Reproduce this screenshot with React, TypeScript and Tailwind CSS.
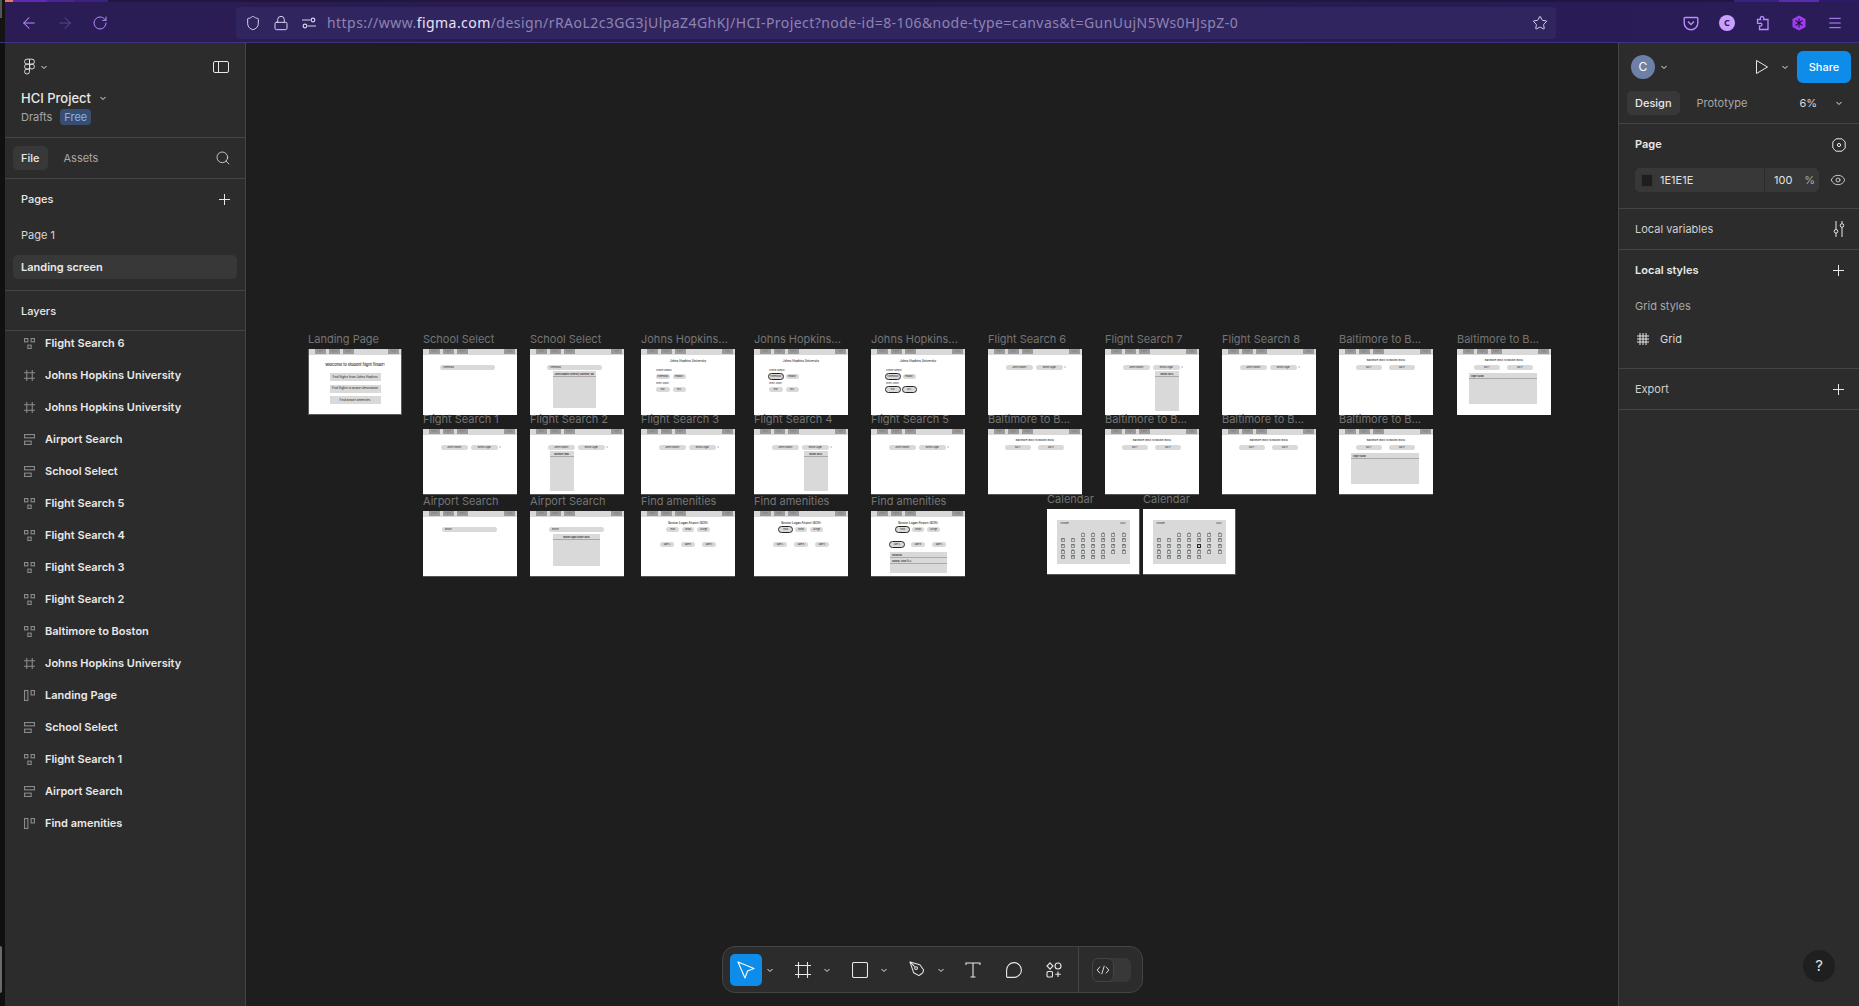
import { ReactNode } from "react";
import { ArrowLeft, ArrowRight, Eye, Lock, Menu, RotateCw, Search, Shield, Star } from "lucide-react";

const Chevron = ({ className = "" }: { className?: string }) => (
  <svg viewBox="0 0 8 8" className={"h-2 w-2 shrink-0 " + className} fill="none" stroke="currentColor" strokeWidth="1">
    <path d="M1.5 3l2.5 2.5L6.5 3" />
  </svg>
);

const PlusIcon = () => (
  <svg viewBox="0 0 11 11" className="mr-[2px] h-[11px] w-[11px]" fill="none" stroke="#e8e8e8">
    <path d="M5.5 0v11M0 5.500h11" />
  </svg>
);

const AutoGrid = () => (
  <svg viewBox="0 0 10 10" className="h-[11px] w-[11px]" fill="none" stroke="#8a8a8a">
    <rect x="0.5" y="0.5" width="3" height="3" />
    <rect x="6.5" y="0.5" width="3" height="3" />
    <rect x="3.5" y="6.5" width="3" height="3" />
  </svg>
);
const FrameHash = () => (
  <svg viewBox="0 0 10 10" className="h-[11px] w-[11px]" fill="none" stroke="#8a8a8a">
    <path d="M2.5 0v10M7.5 0v10M0 2.5h10M0 7.5h10" />
  </svg>
);
const AutoRows = () => (
  <svg viewBox="0 0 10 10" className="h-[11px] w-[11px]" fill="none" stroke="#8a8a8a">
    <rect x="0.5" y="0.5" width="9" height="3" />
    <rect x="0.5" y="6.5" width="6" height="3" />
  </svg>
);
const AutoCols = () => (
  <svg viewBox="0 0 10 10" className="h-[11px] w-[11px]" fill="none" stroke="#8a8a8a">
    <rect x="0.5" y="0.5" width="3" height="9" />
    <rect x="6.5" y="0.5" width="3" height="4" />
  </svg>
);

const layers: [string, ReactNode][] = [
  ["Flight Search 6", <AutoGrid />],
  ["Johns Hopkins University", <FrameHash />],
  ["Johns Hopkins University", <FrameHash />],
  ["Airport Search", <AutoRows />],
  ["School Select", <AutoRows />],
  ["Flight Search 5", <AutoGrid />],
  ["Flight Search 4", <AutoGrid />],
  ["Flight Search 3", <AutoGrid />],
  ["Flight Search 2", <AutoGrid />],
  ["Baltimore to Boston", <AutoGrid />],
  ["Johns Hopkins University", <FrameHash />],
  ["Landing Page", <AutoCols />],
  ["School Select", <AutoRows />],
  ["Flight Search 1", <AutoGrid />],
  ["Airport Search", <AutoRows />],
  ["Find amenities", <AutoCols />],
];

const BrowserBar = () => (
  <div className="relative h-[43px] shrink-0 border-b border-[#40327f] bg-gradient-to-r from-[#2b1c55] via-[#281b50] to-[#2a1c58] font-['Noto_Sans',sans-serif]">
    <div className="absolute left-0 top-0 h-full w-[5px] bg-[#141414]">
      <div className="h-[18px] w-[2px] bg-[#555555]" />
    </div>
    <div className="flex h-[2px] bg-[#20173f]">
      <div className="w-[5px]" />
      <div className="w-[8px] bg-[#e87a68]" />
      <div className="w-[34px] bg-[#5c2bb0]" />
      <div className="w-[27px] bg-[#4a2495]" />
      <div className="w-[34px] bg-[#3d2080]" />
      <div className="ml-auto w-[45px] bg-[#3a2080]" />
      <div className="w-[40px] bg-[#5a2cae]" />
      <div className="w-[40px] bg-[#30196a]" />
    </div>
    <div className="flex h-[41px] items-center pr-[16px]">
      <ArrowLeft className="ml-[20px] h-[18px] w-[18px] text-[#b98cff]" strokeWidth={1.4} />
      <ArrowRight className="ml-[18px] h-[18px] w-[18px] text-[#5b4690]" strokeWidth={1.4} />
      <RotateCw className="ml-[18px] h-[16px] w-[16px] text-[#b98cff]" strokeWidth={1.5} />
      <div className="ml-[128px] flex h-[32px] w-[1320px] items-center rounded-[4px] bg-[#312560] pl-[9px] pr-[8px]">
        <Shield className="h-[16px] w-[16px] text-[#d8d0ee]" strokeWidth={1.5} />
        <Lock className="ml-[12px] h-[16px] w-[16px] text-[#d8d0ee]" strokeWidth={1.5} />
        <svg viewBox="0 0 16 16" className="ml-[12px] h-[16px] w-[16px] text-[#d8d0ee]" fill="none" stroke="currentColor" strokeWidth="1.2">
          <circle cx="4" cy="11" r="1.8" />
          <circle cx="12" cy="5" r="1.8" />
          <path d="M1 5h8.5M6.5 11H15" />
        </svg>
        <span className="ml-[10px] whitespace-nowrap text-[14px] tracking-[0.44px] text-[#8d84b0]">
          https://www.<span className="text-[#e6e2f2]">figma.com</span>/design/rRAoL2c3GG3jUlpaZ4GhKJ/HCI-Project?node-id=8-106&amp;node-type=canvas&amp;t=GunUujN5Ws0HJspZ-0
        </span>
        <Star className="ml-auto h-[16px] w-[16px] text-[#d8d0ee]" strokeWidth={1.5} />
      </div>
      <div className="ml-auto flex items-center gap-[20px]">
        <svg viewBox="0 0 16 16" className="h-[16px] w-[16px] text-[#b98cff]" fill="none" stroke="currentColor" strokeWidth="1.4">
          <path d="M2 2.5h12a.8.8 0 01.8.8V8a6.8 6.8 0 01-13.6 0V3.3a.8.8 0 01.8-.8z" />
          <path d="M5 6.5L8 9.5l3-3" />
        </svg>
        <div className="flex h-[16px] w-[16px] items-center justify-center rounded-full bg-[#c9a0ff] text-[9px] font-bold text-[#2b1c55]">C</div>
        <svg viewBox="0 0 16 16" className="h-[16px] w-[16px] text-[#b98cff]" fill="none" stroke="currentColor" strokeWidth="1.3">
          <path d="M7 1.5c2 0 2.2 2 1.6 3H13v10H4.5v-3.5c1.2.4 2.5-.2 2.5-1.4S5.7 8 4.5 8.4H2.5V4.5H5.6C5 3.5 5.2 1.5 7 1.5z" />
        </svg>
        <svg viewBox="0 0 16 16" className="h-[16px] w-[16px]">
          <path d="M8 .5l6.5 3.5v8L8 15.5 1.5 12V4z" fill="#a03cf0" />
          <path d="M8 3.5v9M4.5 5.5l7 5M11.5 5.5l-7 5" stroke="#1f1540" strokeWidth="1.1" />
        </svg>
        <Menu className="h-[16px] w-[16px] text-[#b98cff]" strokeWidth={1.5} />
      </div>
    </div>
  </div>
);

const LeftPanel = () => (
  <aside className="flex w-[241px] shrink-0 flex-col border-r border-[#444444] bg-[#2c2c2c] text-[11px] text-[#e8e8e8]">
    <div className="h-[95px] shrink-0 border-b border-[#444444] pl-[16px] pr-[16px]">
      <div className="flex h-[47px] items-center">
        <svg viewBox="0 0 12 18" className="ml-[3px] h-[17px] w-[11px]" fill="none" stroke="#e8e8e8" strokeWidth="1">
          <path d="M6 1H3.3a2.7 2.7 0 000 5.4H6zM6 6.4H3.3a2.7 2.7 0 000 5.4H6zM6 11.8H3.3A2.7 2.7 0 106 14.5zM6 1h2.7a2.7 2.7 0 010 5.4H6z" />
          <circle cx="8.7" cy="9.1" r="2.7" />
        </svg>
        <Chevron className="ml-[5px]" />
        <svg viewBox="0 0 16 12" className="ml-auto h-[12px] w-[16px]" fill="none" stroke="#e8e8e8">
          <rect x="0.5" y="0.5" width="15" height="11" rx="1.5" />
          <path d="M5.5 0.5v11" />
        </svg>
      </div>
      <div className="flex items-center text-[13px] font-medium leading-[16px]">
        HCI Project
        <Chevron className="ml-[8px]" />
      </div>
      <div className="mt-[3px] flex items-center leading-[16px] text-[#a8a8a8]">
        Drafts
        <span className="ml-[8px] rounded-[4px] bg-[#3a4c70] px-[4px] text-[#7cb8ee]">Free</span>
      </div>
    </div>
    <div className="flex h-[41px] shrink-0 items-center border-b border-[#444444] pl-[8px] pr-[14px]">
      <span className="flex h-[24px] items-center rounded-[5px] bg-[#383838] px-[8px] font-medium">File</span>
      <span className="ml-[8px] px-[8px] text-[#a8a8a8]">Assets</span>
      <Search className="ml-auto h-[16px] w-[16px]" strokeWidth={1.2} />
    </div>
    <div className="h-[112px] shrink-0 border-b border-[#444444]">
      <div className="flex h-[40px] items-center justify-between pl-[16px] pr-[13px] font-medium">
        Pages
        <PlusIcon />
      </div>
      <div className="flex h-[32px] items-center pl-[16px] text-[#d8d8d8]">Page 1</div>
      <div className="mx-[8px] mt-[4px] flex h-[24px] items-center rounded-[5px] bg-[#383838] pl-[8px] font-semibold">Landing screen</div>
    </div>
    <div className="flex h-[40px] shrink-0 items-center border-b border-[#444444] pl-[16px] pt-[1px] font-medium">Layers</div>
    <div className="-mt-[4px]">
      {layers.map(([name, icon], i) => (
        <div key={i} className="flex h-[32px] items-center pl-[19px] font-semibold">
          <span className="w-[21px]">{icon}</span>
          {name}
        </div>
      ))}
    </div>
  </aside>
);

const Section = ({ title, bold, right, className = "h-[41px]" }: { title: string; bold?: boolean; right?: ReactNode; className?: string }) => (
  <div className={"flex shrink-0 items-center justify-between border-b border-[#444444] pl-[16px] pr-[13px] " + className}>
    <span className={bold ? "font-semibold text-[#f0f0f0]" : "text-[#d0d0d0]"}>{title}</span>
    {right}
  </div>
);

const RightPanel = () => (
  <aside className="relative flex w-[241px] shrink-0 flex-col border-l border-[#444444] bg-[#2c2c2c] text-[11px] text-[#e8e8e8]">
    <div className="flex h-[40px] shrink-0 items-end pl-[12px] pr-[8px]">
      <div className="flex h-[32px] w-full items-center">
        <span className="flex h-[24px] w-[24px] items-center justify-center rounded-full bg-[#6c80a8] text-[12px] text-white">C</span>
        <Chevron className="ml-[5px]" />
        <svg viewBox="0 0 14 16" className="ml-auto h-[16px] w-[14px]" fill="none" stroke="#e8e8e8">
          <path d="M1.5 1.5L12.5 8 1.5 14.5z" strokeLinejoin="round" />
        </svg>
        <Chevron className="ml-[12px]" />
        <span className="ml-[8px] flex h-[32px] w-[54px] items-center justify-center rounded-[6px] bg-[#0d8ce9] font-medium text-white">Share</span>
      </div>
    </div>
    <div className="flex h-[41px] shrink-0 items-center border-b border-[#444444] pl-[8px] pr-[16px]">
      <span className="flex h-[24px] items-center rounded-[5px] bg-[#383838] px-[8px] font-medium">Design</span>
      <span className="ml-[9px] px-[8px] text-[#a8a8a8]">Prototype</span>
      <span className="ml-auto text-[#d8d8d8]">6%</span>
      <Chevron className="ml-[18px]" />
    </div>
    <div className="h-[85px] shrink-0 border-b border-[#444444]">
      <div className="flex h-[41px] items-center justify-between pl-[16px] pr-[13px] font-semibold">
        Page
        <svg viewBox="0 0 14 14" className="h-[14px] w-[14px]" fill="none" stroke="#e8e8e8">
          <path d="M4 .8h6L13.2 4v6L10 13.2H4L.8 10V4z" />
          <circle cx="7" cy="7" r="1.6" />
        </svg>
      </div>
      <div className="mt-[3px] flex items-center pl-[16px] pr-[13px]">
        <div className="flex h-[24px] w-[184px] items-center rounded-[5px] bg-[#383838] pl-[6px] text-[#e0e0e0]">
          <span className="h-[13px] w-[12px] border border-[#333333] bg-[#1e1e1e]" />
          <span className="ml-[7px]">1E1E1E</span>
          <span className="ml-auto flex h-full w-[55px] items-center border-l border-[#2c2c2c] pl-[9px]">
            100
            <span className="ml-[12px] text-[#a8a8a8]">%</span>
          </span>
        </div>
        <Eye className="ml-auto h-[16px] w-[16px]" strokeWidth={1.2} />
      </div>
    </div>
    <Section
      title="Local variables"
      right={
        <svg viewBox="0 0 14 16" className="h-[16px] w-[14px]" fill="none" stroke="#e8e8e8">
          <path d="M4 0v8.500M4 12v4M10 0v2.500M10 6.500V16" />
          <circle cx="4" cy="10.300" r="1.800" />
          <circle cx="10" cy="4.500" r="1.800" />
        </svg>
      }
    />
    <div className="h-[119px] shrink-0 border-b border-[#444444]">
      <div className="flex h-[41px] items-center justify-between pl-[16px] pr-[13px] font-semibold">
        Local styles
        <PlusIcon />
      </div>
      <div className="-mt-[1px] flex h-[32px] items-center pl-[16px] text-[#a8a8a8]">Grid styles</div>
      <div className="flex h-[34px] items-center pl-[18px] text-[#d8d8d8]">
        <svg viewBox="0 0 12 12" className="h-[12px] w-[12px]" fill="none" stroke="#e8e8e8">
          <path d="M3 0v12M6 0v12M9 0v12M0 3h12M0 6h12M0 9h12" />
        </svg>
        <span className="ml-[11px]">Grid</span>
      </div>
    </div>
    <Section title="Export" right={<PlusIcon />} />

    <div className="absolute bottom-[24px] right-[24px] flex h-[32px] w-[32px] items-center justify-center rounded-full bg-[#1f1f1f] text-[15px] text-[#e0e0e0]">?</div>
  </aside>
);

const Tab = ({ children }: { children: string }) => (
  <span className="flex h-[4.5px] w-[11px] items-center justify-center bg-[#9a9a9a] text-[2px] leading-none text-[#777777]">{children}</span>
);

const Pill = ({ className = "", children, on }: { className?: string; children?: ReactNode; on?: boolean }) => (
  <span className={"flex h-[4.5px] shrink-0 items-center justify-center rounded-full bg-[#d9d9d9] text-[2px] leading-none text-[#222222] " + (on ? "outline outline-[0.6px] outline-[#222222] " : "") + className}>
    {children}
  </span>
);

const Title = ({ children, small }: { children: string; small?: boolean }) => (
  <div className={"pt-[4px] text-center font-medium leading-[4px] text-[#222222] " + (small ? "text-[2.500px]" : "text-[3px]")}>{children}</div>
);

const Menu2 = ({ className, title, rows = 1 }: { className: string; title: string; rows?: number }) => (
  <div className={"absolute bg-[#d9d9d9] text-[2px] font-semibold leading-none text-[#222222] " + className}>
    <div className="flex h-[6px] items-center justify-center border-b-[0.6px] border-[#aaaaaa]">{title}</div>
    {rows > 1 && <div className="flex h-[6px] items-center pl-[2px] border-b-[0.6px] border-[#aaaaaa]">Subway, Chick-fil-A</div>}
  </div>
);

const Frame = ({ pos, label, children, edge = "" }: { pos: string; label: string; children?: ReactNode; edge?: string }) => (
  <div className={"absolute h-[66px] w-[94px] " + pos}>
    <div className="absolute -top-[17px] left-0 whitespace-nowrap font-['Inter',sans-serif] text-[11px] leading-[14px] text-[#757575]">{label}</div>
    <div className={"relative h-full w-full overflow-hidden bg-white font-['Inter',sans-serif] " + edge}>
      <div className="flex h-[5.500px] items-start gap-[3px] bg-[#d9d9d9] pl-[5.500px] pr-[2px]">
        <Tab>Home</Tab>
        <Tab>Flights</Tab>
        <Tab>Hotels</Tab>
        <span className="ml-auto">
          <Tab>Login</Tab>
        </span>
      </div>
      {children}
    </div>
  </div>
);

const SearchRow = ({ from = "Johns Hopkins", to = "Boston Logan" }: { from?: string; to?: string }) => (
  <div className="flex items-center pl-[18px] pt-[10.500px]">
    <Pill className="w-[26.500px]">{from}</Pill>
    <Pill className="ml-[3.500px] w-[26.500px]">{to}</Pill>
    <span className="ml-[2px] text-[2px] text-[#333333]">x</span>
  </div>
);

const DateRow = () => (
  <>
    <Title small>Baltimore (BWI) to Boston (BOS)</Title>
    <div className="flex items-center pl-[16.500px] pt-[2.500px]">
      <Pill className="w-[26.500px]">Nov 7</Pill>
      <Pill className="ml-[6.500px] w-[26.500px]">Nov 9</Pill>
    </div>
  </>
);

const Campus = ({ first, second }: { first?: boolean; second?: boolean }) => (
  <>
    <Title>Johns Hopkins University</Title>
    <div className="pl-[15px] pt-[6px] text-[2px] leading-[3px] text-[#222222]">Choose Campus</div>
    <div className="flex gap-[3px] pl-[15px] pt-[2.500px]">
      <Pill className="w-[13.500px]" on={first}>Homewood</Pill>
      <Pill className="w-[13px]">Peabody</Pill>
    </div>
    <div className="pl-[15px] pt-[3px] text-[2px] leading-[3px] text-[#222222]">Select Airport</div>
    <div className="flex gap-[3px] pl-[15px] pt-[2.500px]">
      <Pill className="w-[13.500px]" on={second}>BWI</Pill>
      <Pill className="w-[13px]" on={second}>DCA</Pill>
    </div>
  </>
);

const Amenities = ({ first, second }: { first?: boolean; second?: boolean }) => (
  <>
    <Title>Boston Logan Airport (BOS)</Title>
    <div className="flex justify-center gap-[3px] pt-[2.500px]">
      <Pill className="w-[12.500px]" on={first}>Food</Pill>
      <Pill className="w-[12.500px]">Shops</Pill>
      <Pill className="w-[12.500px]">Lounge</Pill>
    </div>
    <div className="flex justify-center gap-[6.500px] pt-[10.500px]">
      <Pill className="w-[14.500px]" on={second}>Gate A</Pill>
      <Pill className="w-[14.500px]">Gate B</Pill>
      <Pill className="w-[14.500px]">Gate C</Pill>
    </div>
  </>
);

const DAYS = ["", "", "1", "2", "3", "4", "5", "6", "7", "8", "9", "10", "11", "12", "13", "14", "15", "16", "17", "18", "19", "20", "21", "22", "23", "24", "25", "26", "27", "28", "29", "30", "31"];

const Calendar = ({ selected }: { selected?: string }) => (
  <div className="mx-[9.500px] mt-[11px] h-[44px] bg-[#d9d9d9] px-[4px] pt-[2px] text-[2.200px] leading-none text-[#222222]">
    <div className="flex h-[4px] items-center justify-between">
      <span>October</span>
      <span>2024</span>
    </div>
    <div className="mt-[6.500px] grid grid-cols-7 gap-x-[6.200px] gap-y-[1.700px]">
      {DAYS.map((d, i) => (
        <span
          key={i}
          className={
            "flex h-[4px] w-[4px] items-center justify-center rounded-[0.500px] " +
            (d === "" ? "" : d === selected ? "border-[0.700px] border-[#222222]" : "border-[0.400px] border-[#8f8f8f]")
          }
        >
          {d}
        </span>
      ))}
    </div>
  </div>
);

const Canvas = () => (
  <main className="relative min-w-0 flex-1 bg-[#1e1e1e]">
    <Frame pos="left-[62px] top-[306px]" label="Landing Page" edge="border-x border-b border-[#5a5a5a]">
      <div className="pt-[8px] text-center text-[3.800px] font-medium leading-[4px] text-[#111111]">Welcome to student flight finder!</div>
      <div className="flex flex-col items-center gap-[3.500px] pt-[6.500px] text-[3px] leading-none text-[#222222]">
        <span className="flex h-[8px] w-[51px] items-center justify-center bg-[#d9d9d9]">Find flights from Johns Hopkins</span>
        <span className="flex h-[8px] w-[51px] items-center justify-center bg-[#d9d9d9]">Find flights to airport destination</span>
        <span className="flex h-[8px] w-[51px] items-center justify-center bg-[#d9d9d9]">Find airport amenities</span>
      </div>
    </Frame>
    <Frame pos="left-[177px] top-[306px]" label="School Select">
      <div className="pl-[17px] pt-[10.500px]">
        <Pill className="w-[55px] !justify-start pl-[3px]">Homewood</Pill>
      </div>
    </Frame>
    <Frame pos="left-[284px] top-[306px]" label="School Select">
      <div className="pl-[17px] pt-[10.500px]">
        <Pill className="w-[55px] !justify-start pl-[3px]">Homewood</Pill>
      </div>
      <Menu2 className="left-[22.500px] top-[22px] h-[37px] w-[43.500px]" title="Johns Hopkins University, Baltimore, MD" />
    </Frame>
    <Frame pos="left-[395px] top-[306px]" label="Johns Hopkins...">
      <Campus />
    </Frame>
    <Frame pos="left-[508px] top-[306px]" label="Johns Hopkins...">
      <Campus first />
    </Frame>
    <Frame pos="left-[625px] top-[306px]" label="Johns Hopkins...">
      <Campus first second />
    </Frame>
    <Frame pos="left-[742px] top-[306px]" label="Flight Search 6">
      <SearchRow />
    </Frame>
    <Frame pos="left-[859px] top-[306px]" label="Flight Search 7">
      <SearchRow />
      <Menu2 className="left-[50px] top-[22px] h-[40px] w-[24px]" title="Boston (BOS)" />
    </Frame>
    <Frame pos="left-[976px] top-[306px]" label="Flight Search 8">
      <SearchRow />
    </Frame>
    <Frame pos="left-[1093px] top-[306px]" label="Baltimore to B...">
      <DateRow />
    </Frame>
    <Frame pos="left-[1211px] top-[306px]" label="Baltimore to B...">
      <DateRow />
      <Menu2 className="left-[12px] top-[24px] h-[31px] w-[68px] !font-bold [&>div]:!justify-start [&>div]:pl-[2px]" title="Flight 1 $200" />
    </Frame>

    <Frame pos="left-[177px] top-[386px]" label="Flight Search 1" edge="border-b border-[#555555]">
      <SearchRow />
    </Frame>
    <Frame pos="left-[284px] top-[386px]" label="Flight Search 2" edge="border-b border-[#555555]">
      <SearchRow />
      <Menu2 className="left-[20px] top-[22px] h-[40px] w-[23.500px]" title="Baltimore (BWI)" />
    </Frame>
    <Frame pos="left-[395px] top-[386px]" label="Flight Search 3" edge="border-b border-[#555555]">
      <SearchRow />
    </Frame>
    <Frame pos="left-[508px] top-[386px]" label="Flight Search 4" edge="border-b border-[#555555]">
      <SearchRow />
      <Menu2 className="left-[50px] top-[22px] h-[40px] w-[23.500px]" title="Boston (BOS)" />
    </Frame>
    <Frame pos="left-[625px] top-[386px]" label="Flight Search 5" edge="border-b border-[#555555]">
      <SearchRow />
    </Frame>
    <Frame pos="left-[742px] top-[386px]" label="Baltimore to B..." edge="border-b border-[#555555]">
      <DateRow />
    </Frame>
    <Frame pos="left-[859px] top-[386px]" label="Baltimore to B..." edge="border-b border-[#555555]">
      <DateRow />
    </Frame>
    <Frame pos="left-[976px] top-[386px]" label="Baltimore to B..." edge="border-b border-[#555555]">
      <DateRow />
    </Frame>
    <Frame pos="left-[1093px] top-[386px]" label="Baltimore to B..." edge="border-b border-[#555555]">
      <DateRow />
      <Menu2 className="left-[12px] top-[24px] h-[31px] w-[68px] !font-bold [&>div]:!justify-start [&>div]:pl-[2px]" title="Flight 1 $200" />
    </Frame>

    <Frame pos="left-[177px] top-[468px]" label="Airport Search" edge="border-b border-[#555555]">
      <div className="pl-[19px] pt-[10.500px]">
        <Pill className="w-[55px] !justify-start pl-[3px]">Boston</Pill>
      </div>
    </Frame>
    <Frame pos="left-[284px] top-[468px]" label="Airport Search" edge="border-b border-[#555555]">
      <div className="pl-[19px] pt-[10.500px]">
        <Pill className="w-[55px] !justify-start pl-[3px]">Boston</Pill>
      </div>
      <Menu2 className="left-[23px] top-[23px] h-[32px] w-[47px]" title="Boston Logan Airport (BOS)" />
    </Frame>
    <Frame pos="left-[395px] top-[468px]" label="Find amenities" edge="border-b border-[#555555]">
      <Amenities />
    </Frame>
    <Frame pos="left-[508px] top-[468px]" label="Find amenities" edge="border-b border-[#555555]">
      <Amenities first />
    </Frame>
    <Frame pos="left-[625px] top-[468px]" label="Find amenities" edge="border-b border-[#555555]">
      <Amenities first second />
      <Menu2 className="left-[19px] top-[41px] h-[21px] w-[57px] [&>div]:!justify-start [&>div]:pl-[2px]" title="Starbucks" rows={2} />
    </Frame>

    <CalendarFrame pos="left-[801px] top-[466px]" />
    <CalendarFrame pos="left-[897px] top-[466px]" selected="17" />

    <Toolbar />
  </main>
);

const CalendarFrame = ({ pos, selected }: { pos: string; selected?: string }) => (
  <div className={"absolute h-[66px] w-[93px] " + pos}>
    <div className="absolute -top-[17px] left-0 font-['Inter',sans-serif] text-[11px] leading-[14px] text-[#757575]">Calendar</div>
    <div className="h-full w-full overflow-hidden border-b border-r border-[#555555] bg-white font-['Inter',sans-serif]">
      <Calendar selected={selected} />
    </div>
  </div>
);

const Toolbar = () => (
  <div className="absolute left-[476px] top-[903px] flex h-[47px] w-[421px] items-center rounded-[13px] border border-[#444444] bg-[#2c2c2c] pl-[7px] text-[#e8e8e8]">
    <span className="flex h-[32px] w-[32px] items-center justify-center rounded-[5px] bg-[#0d8ce9]">
      <svg viewBox="0 0 18 18" className="h-[18px] w-[18px]" fill="none" stroke="white" strokeWidth="1.100" strokeLinejoin="round">
        <path d="M1 1l16 6.500-6.500 2.500L8 17z" />
      </svg>
    </span>
    <Chevron className="ml-[4px]" />
    <svg viewBox="0 0 16 16" className="ml-[21px] h-[16px] w-[16px]" fill="none" stroke="currentColor" strokeWidth="1.100">
      <path d="M3.500 0v16M12.500 0v16M0 3.500h16M0 12.500h16" />
    </svg>
    <Chevron className="ml-[12px]" />
    <svg viewBox="0 0 16 16" className="ml-[21px] h-[16px] w-[16px]" fill="none" stroke="currentColor" strokeWidth="1.100">
      <rect x="0.500" y="0.500" width="15" height="15" rx="1.500" />
    </svg>
    <Chevron className="ml-[12px]" />
    <svg viewBox="0 0 18 18" className="ml-[21px] h-[17px] w-[17px]" fill="none" stroke="currentColor" strokeWidth="1.100" strokeLinejoin="round">
      <path d="M1 1l10.500 3 4 5.500-1 3-2 1.500-2 1.500L5 12.500z" />
      <path d="M1 1l5 5" />
      <circle cx="7.500" cy="7.500" r="1.500" />
    </svg>
    <Chevron className="ml-[11px]" />
    <svg viewBox="0 0 16 16" className="ml-[20px] h-[16px] w-[16px]" fill="none" stroke="currentColor" strokeWidth="1.100">
      <path d="M1 3V1h14v2M8 1v14M5.500 15h5" />
    </svg>
    <svg viewBox="0 0 16 16" className="ml-[25px] h-[16px] w-[16px]" fill="none" stroke="currentColor" strokeWidth="1.100">
      <path d="M8 .6a7.400 7.400 0 010 14.800H1.800a1.200 1.200 0 01-1.200-1.200V8A7.400 7.400 0 018 .6z" />
    </svg>
    <svg viewBox="0 0 16 16" className="ml-[24px] h-[16px] w-[16px]" fill="none" stroke="currentColor" strokeWidth="1.100">
      <path d="M4 .8L7 4 4 7.200 1 4z" />
      <circle cx="12" cy="4" r="3" />
      <rect x="1" y="9.500" width="5.500" height="5.500" rx="1" />
      <path d="M12 9.500v5.500M9.300 12.300h5.500" />
    </svg>
    <span className="ml-[16px] h-full w-px bg-[#444444]" />
    <span className="ml-[13px] flex h-[24px] w-[39px] rounded-[6px] bg-[#383838]">
      <span className="flex h-[24px] w-[22px] items-center justify-center rounded-[6px] border border-[#444444] bg-[#2c2c2c]">
        <svg viewBox="0 0 16 12" className="h-[10px] w-[14px]" fill="none" stroke="currentColor" strokeWidth="1.100">
          <path d="M4.500 2L1 6l3.500 4M11.500 2L15 6l-3.500 4M9.500 1L6.500 11" />
        </svg>
      </span>
    </span>
  </div>
);

export default function App() {
  return (
    <div className="flex h-screen w-screen flex-col overflow-hidden bg-[#1e1e1e] font-['Inter',sans-serif]">
      <BrowserBar />
      <div className="flex min-h-0 flex-1">
        <div className="relative w-[5px] shrink-0 bg-[#101010]">
          <div className="absolute left-0 top-[903px] h-[47px] w-[2px] rounded-r-[2px] bg-[#6a6a6a]" />
        </div>
        <LeftPanel />
        <Canvas />
        <RightPanel />
      </div>
    </div>
  );
}
